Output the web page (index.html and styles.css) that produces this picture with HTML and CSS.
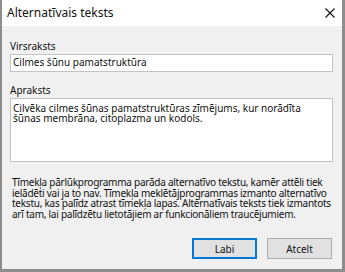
FILE: index.html
```html
<!DOCTYPE html>
<html lang="lv">

  <head>
    <meta charset="UTF-8">
    <meta name="viewport" content="width=device-width, initial-scale=1.0">
    <title>Alternatīvais teksts</title>
    <link rel="stylesheet" href="styles.css">
  </head>

  <body>
    <div class="dialog">
      <div class="titlebar">
        <span class="title">Alternatīvais teksts</span>
        <span class="close">
          <svg width="10" height="10" viewBox="0 0 10 10">
            <path d="M0.5 0.5 L9.5 9.5 M9.5 0.5 L0.5 9.5" stroke="#111" stroke-width="1.1" fill="none" />
          </svg>
        </span>
      </div>
      <div class="content">
        <div class="label">Virsraksts</div>
        <div class="field">Cilmes šūnu pamatstruktūra</div>

        <div class="label label-second">Apraksts</div>
        <div class="field area">Cilvēka cilmes šūnas pamatstruktūras zīmējums, kur norādīta<br>šūnas membrāna, citoplazma un kodols.</div>

        <!-- rindas salauztas tāpat kā oriģinālā -->
        <p class="note">
          Tīmekļa pārlūkprogramma parāda alternatīvo tekstu, kamēr attēli tiek<br>
          ielādēti vai ja to nav. Tīmekļa meklētājprogrammas izmanto alternatīvo<br>
          tekstu, kas palīdz atrast tīmekļa lapas. Alternatīvais teksts tiek izmantots<br>
          arī tam, lai palīdzētu lietotājiem ar funkcionāliem traucējumiem.
        </p>

        <div class="buttons">
          <div class="btn btn-default">Labi</div>
          <div class="btn">Atcelt</div>
        </div>
      </div>
    </div>
  </body>

</html>
```

FILE: styles.css
```css
* {
  padding: 0;
  margin: 0;
  box-sizing: border-box;
}

body {
  background: #f0f0f0;
  font-family: "Noto Sans", "Liberation Sans", sans-serif;
  color: #111;
}

.dialog {
  width: 345px;
  height: 272px;
  border-left: 2px solid #8d8d8d;
  border-right: 3px solid #8d8d8d;
  border-bottom: 3px solid #8d8d8d;
  background: #f0f0f0;
  display: flex;
  flex-direction: column;
}

.titlebar {
  height: 26px;
  background: #fff;
  display: flex;
  align-items: center;
  justify-content: space-between;
  padding: 0 5px 1px 5px;
}

.title {
  font-size: 12px;
}

.close {
  display: flex;
  margin-right: 2px;
}

.content {
  flex: 1;
  padding: 14px 9px 0 8px;
  display: flex;
  flex-direction: column;
}

.label {
  font-size: 10px;
  line-height: 13px;
  margin-bottom: 1px;
}

.label-second {
  margin-top: 12px;
}

.field {
  height: 18px;
  background: #fff;
  border: 1px solid #c3c3c3;
  font-size: 10px;
  line-height: 15px;
  padding: 0 2px;
  white-space: nowrap;
}

.area {
  height: 64px;
  line-height: 10px;
  padding-top: 4px;
}

.note {
  font-size: 10px;
  line-height: 10.67px;
  letter-spacing: -0.25px;
  margin-top: 15px;
  padding-left: 2px;
  white-space: nowrap;
}

.buttons {
  margin-top: auto;
  margin-bottom: 10px;
  display: flex;
  justify-content: flex-end;
  gap: 10px;
  padding-right: 1px;
}

.btn {
  width: 65px;
  height: 21px;
  background: #e1e1e1;
  border: 1px solid #adadad;
  font-size: 10px;
  display: flex;
  align-items: center;
  justify-content: center;
}

.btn-default {
  border: 2px solid #0078d7;
}
```
